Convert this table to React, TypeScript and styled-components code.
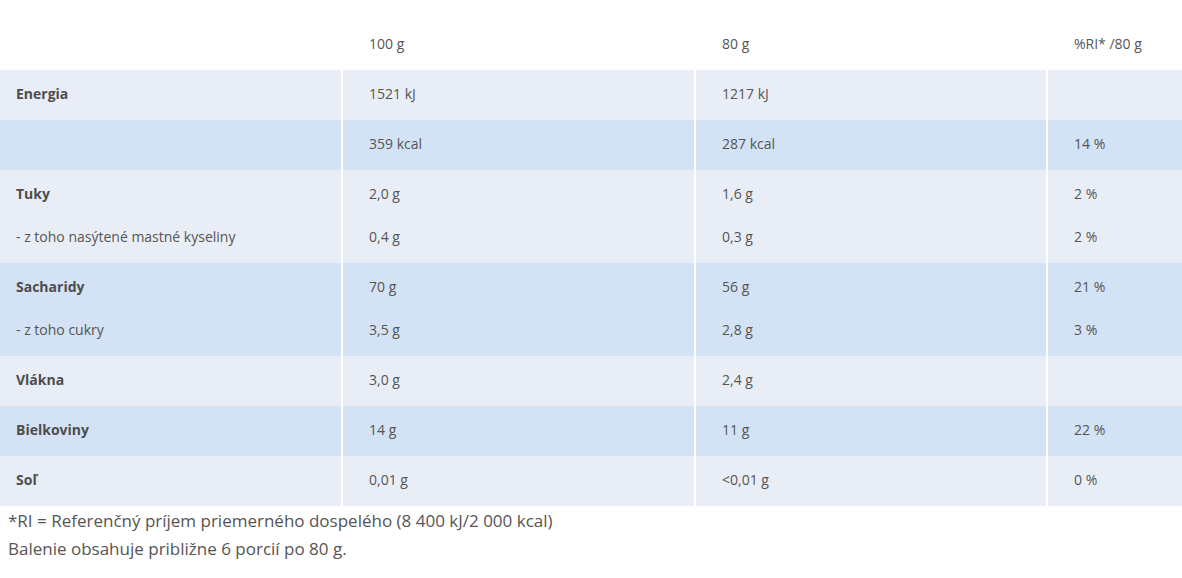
import React from 'react';
import styled, { createGlobalStyle } from 'styled-components';

const GlobalStyle = createGlobalStyle`
  html, body {
    margin: 0;
    padding: 0;
    background: #fff;
  }
  body {
    font-family: 'Open Sans', 'Noto Sans', sans-serif;
    color: #555;
  }
`;

const Wrapper = styled.div`
  width: 1182px;
  padding-top: 20px;
`;

const Table = styled.div`
  display: flex;
  flex-direction: column;
`;

const Row = styled.div<{ tone?: 'light' | 'dark' | 'none' }>`
  display: grid;
  grid-template-columns: 341px 351px 350px 1fr;
  column-gap: 2px;
  background: #fff;

  & > div {
    background: ${(p) =>
      p.tone === 'dark' ? '#d3e2f4' : p.tone === 'light' ? '#e9eef6' : '#fff'};
  }
`;

const Cell = styled.div<{ first?: boolean }>`
  display: flex;
  flex-direction: column;
  gap: 19px;
  padding: 12px ${(p) => (p.first ? '16px' : '26px')} 14px;
  font-size: 14px;
  line-height: 24px;
`;

const Label = styled.span<{ bold?: boolean }>`
  font-weight: ${(p) => (p.bold ? 700 : 400)};
  color: ${(p) => (p.bold ? '#4d4d4d' : '#555')};
  white-space: nowrap;
`;

const Notes = styled.div`
  padding: 1px 8px 0;
  font-size: 17px;
  line-height: 28px;
  color: #555;
`;

type Line = { label: string; bold?: boolean; v100: string; v80: string; ri: string };
type Group = { tone: 'light' | 'dark'; lines: Line[] };

const groups: Group[] = [
  { tone: 'light', lines: [{ label: 'Energia', bold: true, v100: '1521 kJ', v80: '1217 kJ', ri: '' }] },
  { tone: 'dark', lines: [{ label: '', v100: '359 kcal', v80: '287 kcal', ri: '14 %' }] },
  {
    tone: 'light',
    lines: [
      { label: 'Tuky', bold: true, v100: '2,0 g', v80: '1,6 g', ri: '2 %' },
      { label: '- z toho nasýtené mastné kyseliny', v100: '0,4 g', v80: '0,3 g', ri: '2 %' },
    ],
  },
  {
    tone: 'dark',
    lines: [
      { label: 'Sacharidy', bold: true, v100: '70 g', v80: '56 g', ri: '21 %' },
      { label: '- z toho cukry', v100: '3,5 g', v80: '2,8 g', ri: '3 %' },
    ],
  },
  { tone: 'light', lines: [{ label: 'Vlákna', bold: true, v100: '3,0 g', v80: '2,4 g', ri: '' }] },
  { tone: 'dark', lines: [{ label: 'Bielkoviny', bold: true, v100: '14 g', v80: '11 g', ri: '22 %' }] },
  { tone: 'light', lines: [{ label: 'Soľ', bold: true, v100: '0,01 g', v80: '<0,01 g', ri: '0 %' }] },
];

export default function App() {
  return (
    <Wrapper>
      <GlobalStyle />
      <Table>
        <Row tone="none">
          <Cell first />
          <Cell>100 g</Cell>
          <Cell>80 g</Cell>
          <Cell>%RI* /80 g</Cell>
        </Row>
        {groups.map((g, i) => (
          <Row key={i} tone={g.tone}>
            <Cell first>
              {g.lines.map((l, j) => (
                <Label key={j} bold={l.bold}>
                  {l.label || '\u00a0'}
                </Label>
              ))}
            </Cell>
            <Cell>
              {g.lines.map((l, j) => (
                <Label key={j}>{l.v100}</Label>
              ))}
            </Cell>
            <Cell>
              {g.lines.map((l, j) => (
                <Label key={j}>{l.v80}</Label>
              ))}
            </Cell>
            <Cell>
              {g.lines.map((l, j) => (
                <Label key={j}>{l.ri || '\u00a0'}</Label>
              ))}
            </Cell>
          </Row>
        ))}
      </Table>
      <Notes>
        <div>*RI = Referenčný príjem priemerného dospelého (8 400 kJ/2 000 kcal)</div>
        <div>Balenie obsahuje približne 6 porcií po 80 g.</div>
      </Notes>
    </Wrapper>
  );
}
